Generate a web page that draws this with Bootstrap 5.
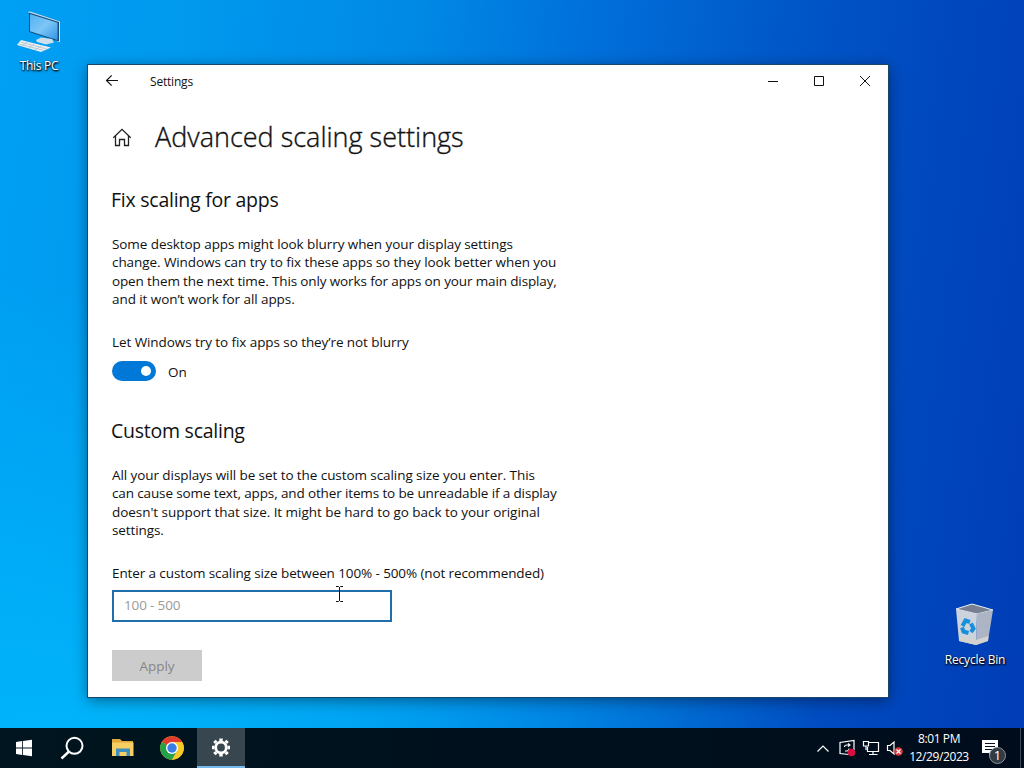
<!DOCTYPE html>
<html lang="en">
<head>
<meta charset="utf-8">
<title>Settings</title>
<link rel="stylesheet" href="https://cdn.jsdelivr.net/npm/bootstrap@5.3.0/dist/css/bootstrap.min.css">
<style>
body{font-family:"Open Sans","Noto Sans",sans-serif;color:#111;width:1024px;height:768px;
 background:radial-gradient(ellipse 760px 480px at 60px 760px,rgba(0,184,252,.9),rgba(0,180,250,.6) 45%,transparent),
 linear-gradient(97deg,#00a0f4 0,#0099ee 17%,#0088e5 38%,#0070da 53%,#0058c8 70%,#0048be 85%,#003cb6 100%);}
.desk-icon{position:absolute;width:76px;font-size:12px;line-height:16px;color:#fff;letter-spacing:-.3px;text-shadow:0 1px 2px #000,1px 1px 2px #000}
.pc{left:1px;top:10px}
.bin{left:937px;top:602px}
.bin span{margin-top:6px;letter-spacing:-.22px}
.win{position:absolute;left:88px;top:65px;width:800px;height:632px;outline:1px solid #17456b;box-shadow:0 3px 14px rgba(0,0,0,.45)}
.titlebar{height:33px;font-size:12px;letter-spacing:-.2px}
.titlebar span{margin-left:14px}
.caption{width:46px}
.pane{padding:0 24px;font-size:13.5px;line-height:18.4px;letter-spacing:-.105px}
.page-head{height:80px}
h1{font-size:27px;line-height:36px;margin:-2px 0 0 23px;font-weight:300;letter-spacing:0;-webkit-text-stroke:.35px #111}
h2{font-size:19.5px;line-height:26px;margin:37px 0 22px -1px;font-weight:400;letter-spacing:-.25px}
.page-head+h2{margin-top:9px}
.pane p{margin-bottom:24px}
.pane .setting-name{margin-bottom:10px}
.l1{letter-spacing:-.075px}.l2{letter-spacing:-.13px}.l3{letter-spacing:-.045px}
.toggle-row{height:20px}
.toggle-row span{margin:2px 0 0 12px}
.toggle{width:44px;height:20px;border-radius:10px;background:#0078d7;padding:0 5px}
.knob{width:10px;height:10px;border-radius:50%;background:#fff}
.size-label{margin-bottom:7.600px}
.size-box.form-control{width:280px;height:32px;border:2px solid #1f6fad;border-radius:0;font-size:13.5px;padding:0 10px 2px;box-shadow:none;color:#111;letter-spacing:-.15px}
.size-box::placeholder{color:#999}
.apply.btn{display:block;width:90px;height:31px;margin-top:28px;border:0;border-radius:0;background:#ccc;color:#868686;font-size:13.5px;opacity:1;padding:2px 0 0}
.ibeam{position:absolute;left:247px;top:521px}
.taskbar{height:40px;background:linear-gradient(90deg,#00151f,#00101c 60%,#000c1c);color:#fff}
.task{width:49px;height:40px}
.task.active{width:48px;margin-left:1px;background:#38474f;border-bottom:2px solid #76b9ed}
.tray{height:40px}
.clock{font-size:12px;line-height:18px;width:66px;letter-spacing:-.4px}
.alerts{width:48px;height:40px}
.peek{width:4px;height:40px;border-left:1px solid #3c4a56}
</style>
<script src="https://cdn.jsdelivr.net/npm/bootstrap@5.3.0/dist/js/bootstrap.bundle.min.js"></script>
</head>
<body class="position-relative overflow-hidden d-flex flex-column">
<div class="desk-icon pc d-flex flex-column align-items-center">
 <svg width="44" height="44" viewBox="0 0 44 44"><defs><linearGradient id="scr" x2="1" y2="1"><stop stop-color="#4fb2f2"/><stop offset=".5" stop-color="#7cc6f7"/><stop offset="1" stop-color="#3396e4"/></linearGradient></defs>
 <path d="M11 2 13 1.500 43 11.500V32L41 32z" fill="#d5e3ec"/><path d="M12 2.500 42 12V31.500L12 22z" fill="#174e7e"/><path d="M13 4 40.500 12.700V30L13 21.300z" fill="url(#scr)"/><path d="M24 27.500 35 29 37 32.500 29 34.500 20 32 19 30z" fill="#cfdfe9"/><path d="M4 30 34 37.500 24 42 0 35z" fill="#e9eef1"/><path d="M4 32.200 30 39M2 34 27 40.500M10 32 5 36M17 34 12 38M24 36 18 40" stroke="#b3c0cb" stroke-width=".8" fill="none"/></svg>
 <span class="mt-1">This PC</span></div>
<div class="desk-icon bin d-flex flex-column align-items-center">
 <svg width="40" height="44" viewBox="0 0 40 44"><path d="M1 7 17 2 38 8 22 12z" fill="#777f91" stroke="#edf1f5"/><path d="M22 12 38 8 33 39 21 43z" fill="#adb5c5"/><path d="M1 7 22 12 21 43 4 39z" fill="#cdd3dc"/><path d="M4 34 21 38 33.500 34 33 39 21 43 4 39z" fill="#d4d2ce"/><g fill="none" stroke="#188fdb" stroke-width="4"><path d="M7.500 24 10.500 18.500 15 20"/><path d="M16 21.500 18.500 26.500 16 30"/><path d="M7 25.500 8.500 29.500 13.500 31"/></g></svg>
 <span>Recycle Bin</span></div>

<main class="win bg-white d-flex flex-column">
 <header class="titlebar d-flex align-items-center">
  <svg width="48" height="34" fill="none" stroke="#111" stroke-width="1.200"><path d="M30 15.500H18.500M23.700 10.300 18.500 15.500 23.700 20.700"/></svg>
  <span>Settings</span>
  <div class="ms-auto d-flex">
   <svg class="caption" height="33" fill="none" stroke="#111"><path d="M18 16.500H28"/></svg>
   <svg class="caption" height="33" fill="none" stroke="#111"><path d="M18.500 11.500H27.500V20.500H18.500z"/></svg>
   <svg class="caption" height="33" fill="none" stroke="#111"><path d="M18 11 28 21M28 11 18 21"/></svg>
  </div>
 </header>
 <section class="pane">
  <div class="page-head d-flex align-items-center">
   <svg width="20" height="20" viewBox="0 0 20 20" fill="none" stroke="#222" stroke-width="1.300"><path d="M1.300 9.800 10 1.300 18.700 9.800M3.500 8V17.500H7.500V11.500H12.500V17.500H16.500V8"/></svg>
   <h1>Advanced scaling settings</h1>
  </div>
  <h2>Fix scaling for apps</h2>
  <p><span class="l1">Some desktop apps might look blurry when your display settings</span><br><span class="l1">change. Windows can try to fix these apps so they look better when you</span><br><span class="l2">open them the next time. This only works for apps on your main display,</span><br><span class="l1">and it won’t work for all apps.</span></p>
  <p class="setting-name l1">Let Windows try to fix apps so they’re not blurry</p>
  <div class="toggle-row d-flex align-items-center"><div class="toggle d-flex align-items-center justify-content-end"><i class="knob"></i></div><span>On</span></div>
  <h2>Custom scaling</h2>
  <p><span class="l1">All your displays will be set to the custom scaling size you enter. This</span><br><span class="l2">can cause some text, apps, and other items to be unreadable if a display</span><br><span class="l3">doesn't support that size. It might be hard to go back to your original</span><br>settings.</p>
  <label class="size-label d-block" for="size">Enter a custom scaling size between 100% - 500% (not recommended)</label>
  <input id="size" class="size-box form-control" placeholder="100 - 500">
  <button class="apply btn" disabled>Apply</button>
 </section>
 <svg class="ibeam" width="9" height="16" fill="none" stroke="#111"><path d="M1 .500H3.500L4.500 1.500 5.500 .500H8M4.500 1V15M1 15.500H3.500L4.500 14.500 5.500 15.500H8"/></svg>
</main>

<footer class="taskbar d-flex align-items-center mt-auto">
 <svg class="task" viewBox="0 0 49 40" fill="#fff"><path d="M16 13.900 22.200 13V19.600H16zM23 12.900 32 11.700V19.600H23zM16 20.400H22.200V27L16 26.100zM23 20.400H32V28.300L23 27.100z"/></svg>
 <svg class="task" viewBox="0 0 49 40" fill="none" stroke="#fff" stroke-width="2"><circle cx="25.500" cy="17.800" r="8"/><path d="M20 23.500 12.500 30.500" stroke-width="2.400"/></svg>
 <svg class="task" viewBox="0 0 49 40"><path d="M14 11H22L24 13H35V28H14z" fill="#e3a93a"/><path d="M14 14.500H35.500V28H14z" fill="#f8cf62"/><path d="M18 20.500H32V28H28.500V24H21.500V28H18z" fill="#3f8fc0"/></svg>
 <svg class="task" viewBox="0 0 49 40"><circle cx="25" cy="20" r="11.800" fill="#f7c927"/><path d="M25 20 14.800 14A11.800 11.800 0 0 1 35.200 14z" fill="#e23b2e"/><path d="M14.800 14A11.800 11.800 0 0 0 25 31.800L30.200 23 25 20z" fill="#27a04b"/><path d="M25 14H35.200A11.800 11.800 0 0 1 25 31.800L30.200 23z" fill="#f7c927"/><circle cx="25" cy="20" r="6" fill="#fff"/><circle cx="25" cy="20" r="4.700" fill="#3b7de6"/></svg>
 <div class="task active d-flex justify-content-center align-items-center"><svg width="20" height="20" viewBox="-10 -10.500 20 20" fill="none" stroke="#fff"><circle r="5.300" stroke-width="2.800"/><g stroke-width="3.400"><path d="M0-9V-6.500M0 9V6.500M-9 0H-6.500M9 0H6.500M-6.600-6.600-4.700-4.700M6.600 6.600 4.700 4.700M-6.600 6.600-4.700 4.700M6.600-6.600 4.700-4.700"/></g></svg></div>
 <div class="tray d-flex align-items-center ms-auto">
  <svg width="92" height="40" viewBox="-2 0 92 40" fill="none" stroke="#fff" stroke-width="1.200"><path d="M1.500 23.500 7 18 12.500 23.500"/>
   <path d="M38 22V12.500L24 14.500V25.500L33 26.500"/><path d="M28.500 19Q28.500 17 31 17H33.500M32 15.300 34 17 32 18.700M33 20.500Q33 23 31 23H29" stroke-width="1.100"/><circle cx="35.500" cy="24.500" r="3.800" fill="#d9103f" stroke="none"/>
   <path d="M53 14.500H62.500V23.500H51.500V19M57 23.500V26.500M53 26.500H61.500"/><path d="M47.500 13.500H52.500V18H47.500zM50 18V22"/>
   <path d="M78 14V26L74 22.500H71.500V17.500H74z"/><circle cx="82.500" cy="23.500" r="4.300" fill="#d9363a" stroke="none"/><path d="M80.500 21.500 84.500 25.500M84.500 21.500 80.500 25.500"/></svg>
  <div class="clock text-center">8:01 PM<br>12/29/2023</div>
  <svg class="alerts" viewBox="1 0 48 40"><path d="M11 12H27V25H22L18 29V25H11z" fill="#fff"/><path d="M14 15.500H24M14 18.500H24M14 21.500H21" stroke="#06121d"/><circle cx="26.500" cy="27.500" r="8" fill="#333b42" stroke="#89929a"/><text x="26.500" y="32" text-anchor="middle" font-size="13" fill="#fff">1</text></svg>
  <div class="peek"></div>
 </div>
</footer>
</body>
</html>
